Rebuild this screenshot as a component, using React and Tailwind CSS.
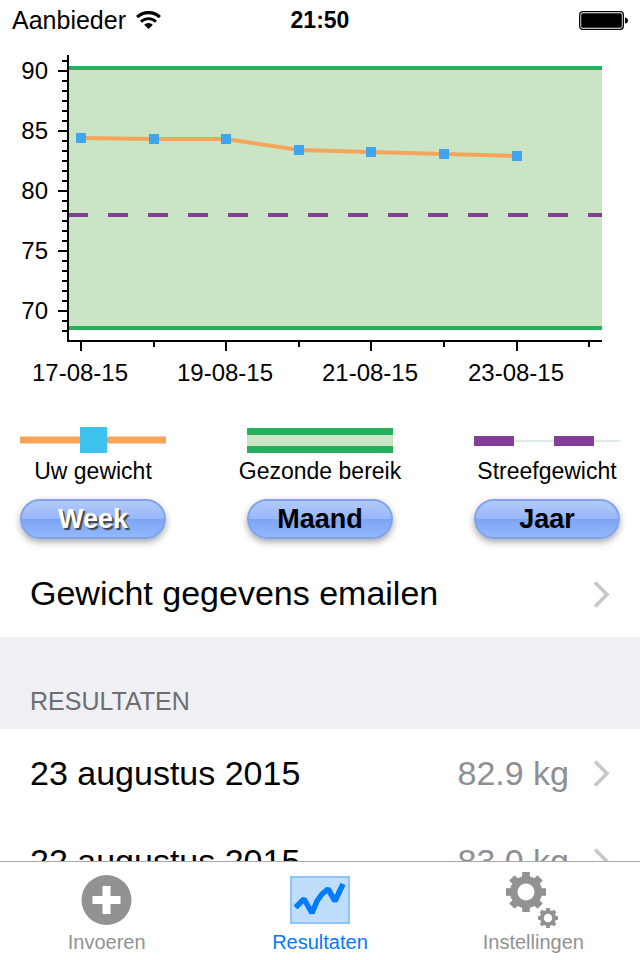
import { useState } from "react";

const WEIGHTS = [84.4, 84.3, 84.3, 83.4, 83.25, 83.1, 82.9];
const DATE_LABELS = ["17-08-15", "19-08-15", "21-08-15", "23-08-15"];
const RANGES = ["Week", "Maand", "Jaar"];
const RESULTS = [
  { date: "23 augustus 2015", weight: "82.9 kg" },
  { date: "22 augustus 2015", weight: "83.0 kg" },
];

const xFor = (day) => Math.round(81 + day * 72.6);
const yFor = (kg) => 31 + (90 - kg) * 12;

function WeightChart() {
  const points = WEIGHTS.map((kg, day) => [xFor(day), Math.round(yFor(kg))]);
  const yTicks = Array.from({ length: 28 }, (_, i) => 21 + i * 10);

  return (
    <svg viewBox="0 0 640 350" className="block w-full" role="img" aria-label="Gewicht">
      <rect x="69" y="28" width="533" height="260" fill="#cae5c5" />
      <path d="M69 28H602M69 288H602" stroke="#27b05b" strokeWidth="4" />
      <path d="M68 175H602" stroke="#813f96" strokeWidth="4" strokeDasharray="20 20" />

      <path d="M68 15V302M67 301H602" stroke="#000" strokeWidth="2" />
      {yTicks.map((y, i) => (
        <path key={y} d={`M${i % 6 === 1 ? 58 : 62} ${y}H68`} stroke="#000" strokeWidth="2" />
      ))}
      {Array.from({ length: 8 }, (_, day) => (
        <path
          key={day}
          d={`M${xFor(day)} 301V${day % 2 === 0 ? 311 : 307}`}
          stroke="#000"
          strokeWidth="2"
        />
      ))}

      <polyline
        points={points.map((p) => p.join(",")).join(" ")}
        fill="none"
        stroke="#f5a45c"
        strokeWidth="4"
      />
      {points.map(([x, y]) => (
        <rect key={x} x={x - 5} y={y - 5} width="10" height="10" fill="#3fa5ee" />
      ))}

      <g fontSize="24" fill="#000">
        {[90, 85, 80, 75, 70].map((kg) => (
          <text key={kg} x="48" y={yFor(kg) + 8} textAnchor="end">
            {kg}
          </text>
        ))}
        {DATE_LABELS.map((label, i) => (
          <text key={label} x={xFor(i * 2) - 1} y="341" textAnchor="middle">
            {label}
          </text>
        ))}
      </g>
    </svg>
  );
}

function WeightSwatch() {
  return (
    <svg width="146" height="26" viewBox="0 0 146 26" aria-hidden="true">
      <path d="M0 13H146" stroke="#f8a35a" strokeWidth="7" />
      <rect x="60" width="27" height="26" fill="#3ec3f1" />
    </svg>
  );
}

function HealthySwatch() {
  return (
    <svg width="146" height="26" viewBox="0 0 146 26" aria-hidden="true">
      <rect y="1" width="146" height="25" fill="#27b05b" />
      <rect y="8" width="146" height="11" fill="#cae5c5" />
    </svg>
  );
}

function TargetSwatch() {
  return (
    <svg width="146" height="26" viewBox="0 0 146 26" aria-hidden="true">
      <path d="M0 14H146" stroke="#dfeae5" strokeWidth="2" />
      <path d="M0 14H40M80 14H120" stroke="#843e98" strokeWidth="10" />
    </svg>
  );
}

function LegendItem({ label, children }) {
  return (
    <li className="flex w-[146px] flex-col items-center gap-1.5">
      {children}
      <span className="text-[23px] leading-6 whitespace-nowrap">{label}</span>
    </li>
  );
}

function RangeButton({ label, active, onClick }) {
  return (
    <button
      type="button"
      aria-pressed={active}
      onClick={onClick}
      className={`h-10 w-[146px] rounded-full border-2 border-[#7fa4ec] bg-[linear-gradient(#b2cafb_0%,#98b7f8_50%,#7da4f5_50%,#93b8fd_100%)] text-[27px] leading-9 font-bold shadow-[0_3px_7px_rgba(0,0,0,0.35)] ${
        active ? "text-white [text-shadow:2px_2px_1px_#444]" : "text-black"
      }`}
    >
      {label}
    </button>
  );
}

function Chevron() {
  return (
    <svg width="17" height="28" viewBox="0 0 17 28" fill="none" aria-hidden="true">
      <path d="M2 2.5 14 14.5 2 26.5" stroke="#c7c7cc" strokeWidth="3.6" />
    </svg>
  );
}

function StatusBar() {
  return (
    <header className="grid h-10 shrink-0 grid-cols-3 items-center px-3">
      <div className="flex items-center gap-2.5">
        <span className="text-[25px] leading-8">Aanbieder</span>
        <svg width="25" height="18" viewBox="0 0 25 18" fill="none" aria-label="Wifi">
          <path d="M1.2 6.2A16 16 0 0 1 23.8 6.2" stroke="#000" strokeWidth="3.2" />
          <path d="M5 10.8A10.6 10.6 0 0 1 20 10.8" stroke="#000" strokeWidth="2.8" />
          <path d="M12.5 18 8.2 13.8A6 6 0 0 1 16.8 13.8Z" fill="#000" />
        </svg>
      </div>
      <span className="text-center text-[23px] leading-8 font-bold">21:50</span>
      <svg
        width="49"
        height="19"
        viewBox="0 0 49 19"
        className="justify-self-end"
        aria-label="Batterij"
      >
        <rect x="0.7" y="0.7" width="43.6" height="17.6" rx="3" fill="#fff" stroke="#000" strokeWidth="1.3" />
        <rect x="2.2" y="2.2" width="40.6" height="14.6" rx="1.5" fill="#000" />
        <path d="M46 6.5Q49 7 49 9.5T46 12.5Z" fill="#000" />
      </svg>
    </header>
  );
}

function AddIcon() {
  return (
    <svg width="52" height="52" viewBox="0 0 52 52" aria-hidden="true">
      <circle cx="25.5" cy="26" r="25" fill="#929292" />
      <path d="M25.5 12V40M11.5 26H39.5" stroke="#fff" strokeWidth="8" />
    </svg>
  );
}

function ResultsIcon() {
  return (
    <svg width="60" height="48" viewBox="0 0 60 48" fill="none" aria-hidden="true">
      <rect x="1" y="1" width="58" height="46" fill="#bfdefe" stroke="#8fc4fb" strokeWidth="2" />
      <path
        d="M5.5 31.5 14 23 22 37 27 25 32 18 38 13 45 25 53 8"
        stroke="#007aff"
        strokeWidth="5.5"
        strokeLinejoin="bevel"
      />
    </svg>
  );
}

function Gear({ x, y, scale }) {
  return (
    <g transform={`translate(${x} ${y}) scale(${scale})`}>
      <circle r="12.3" fill="none" stroke="#929292" strokeWidth="7.6" />
      {[0, 45, 90, 135, 180, 225, 270, 315].map((angle) => (
        <rect
          key={angle}
          x="-3.8"
          y="-20"
          width="7.6"
          height="7"
          fill="#929292"
          transform={`rotate(${angle})`}
        />
      ))}
    </g>
  );
}

function SettingsIcon() {
  return (
    <svg width="54" height="56" viewBox="0 0 54 56" aria-hidden="true">
      <Gear x={20} y={20} scale={1} />
      <Gear x={42} y={46} scale={0.5} />
    </svg>
  );
}

function Tab({ href, label, active, children }) {
  return (
    <a
      href={href}
      aria-current={active ? "page" : undefined}
      className={`flex flex-1 flex-col items-center text-xl leading-6 ${
        active ? "text-[#007aff]" : "text-[#929292]"
      }`}
    >
      <span className="flex h-17 items-center pt-2">{children}</span>
      {label}
    </a>
  );
}

export default function App() {
  const [range, setRange] = useState("Week");

  return (
    <div className="flex h-screen flex-col overflow-hidden bg-white font-['Liberation_Sans',Arial,sans-serif] text-black">
      <StatusBar />

      <main className="min-h-0 flex-1 overflow-hidden">
        <WeightChart />

        <section className="px-5 pt-[37px] pb-[11px]">
          <ul className="flex justify-between">
            <LegendItem label="Uw gewicht">
              <WeightSwatch />
            </LegendItem>
            <LegendItem label="Gezonde bereik">
              <HealthySwatch />
            </LegendItem>
            <LegendItem label="Streefgewicht">
              <TargetSwatch />
            </LegendItem>
          </ul>
          <div className="mt-4 flex justify-between">
            {RANGES.map((name) => (
              <RangeButton
                key={name}
                label={name}
                active={range === name}
                onClick={() => setRange(name)}
              />
            ))}
          </div>
        </section>

        <a href="#email" className="flex h-[87px] items-center justify-between px-[30px] text-[34px]">
          Gewicht gegevens emailen
          <Chevron />
        </a>

        <h2 className="flex h-[92px] items-end bg-[#efeff4] px-[30px] pb-3 text-[25px] leading-8 text-[#6d6d72]">
          RESULTATEN
        </h2>

        <ul>
          {RESULTS.map((result) => (
            <li key={result.date}>
              <a href="#resultaat" className="flex h-22 items-center px-[30px] text-[34px]">
                <span className="flex-1">{result.date}</span>
                <span className="mr-6 text-[#8e8e93]">{result.weight}</span>
                <Chevron />
              </a>
            </li>
          ))}
        </ul>
      </main>

      <nav className="flex h-[99px] shrink-0 border-t border-[#a8a8a8] bg-white">
        <Tab href="#invoeren" label="Invoeren">
          <AddIcon />
        </Tab>
        <Tab href="#resultaten" label="Resultaten" active>
          <ResultsIcon />
        </Tab>
        <Tab href="#instellingen" label="Instellingen">
          <SettingsIcon />
        </Tab>
      </nav>
    </div>
  );
}
